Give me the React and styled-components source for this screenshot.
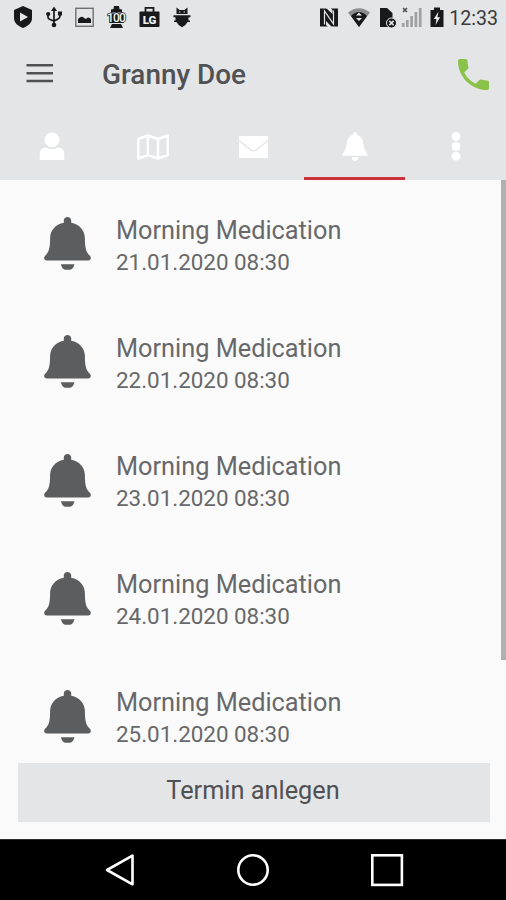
import React from "react";
import styled, { createGlobalStyle } from "styled-components";

const GlobalStyle = createGlobalStyle`
  * { box-sizing: border-box; }
  body { margin: 0; background: #fafafa; font-family: Roboto, "Liberation Sans", sans-serif; }
  svg { display: block; flex: none; overflow: visible; }
`;

const Screen = styled.div`
  display: flex;
  flex-direction: column;
  width: 506px;
  height: 900px;
  overflow: hidden;
  background: #fafafa;
`;

const Header = styled.header`
  flex: none;
  height: 180px;
  background: #e4e5e7;
`;

const StatusBar = styled.div`
  display: flex;
  justify-content: space-between;
  height: 36px;
  padding: 5px 8px 0 13px;
`;

const StatusGroup = styled.div`
  display: flex;
  align-items: flex-start;
  gap: ${(p) => p.$gap}px;
`;

const Clock = styled.span`
  margin-left: -3px;
  font-size: 19.6px;
  line-height: 27px;
  color: #3a3b3c;
`;

const AppBar = styled.div`
  display: flex;
  align-items: center;
  height: 77px;
  padding: 0 17px 0 26px;
`;

const MenuButton = styled.button`
  display: flex;
  padding: 0 0 1px;
  border: 0;
  background: none;
`;

const PageTitle = styled.h1`
  flex: 1;
  margin: 1px 0 0 49px;
  font-size: 27.9px;
  line-height: 32px;
  font-weight: 500;
  white-space: nowrap;
  color: #505153;
`;

const CallButton = styled.button`
  display: flex;
  padding: 0 0 1px;
  border: 0;
  background: none;
`;

const Tabs = styled.nav`
  display: grid;
  grid-template-columns: repeat(5, 1fr);
  height: 67px;
`;

const Tab = styled.button`
  display: flex;
  align-items: center;
  justify-content: center;
  padding: 3px 0 0 2px;
  border: 0;
  border-bottom: 3px solid ${(p) => (p.$active ? "#cc3338" : "transparent")};
  background: none;
`;

const Content = styled.main`
  display: flex;
  flex: none;
  height: 659px;
`;

const Column = styled.div`
  display: flex;
  flex-direction: column;
  flex: 1;
  padding-bottom: 17px;
`;

const List = styled.ul`
  flex: 1;
  min-height: 0;
  overflow: hidden;
  margin: 0;
  padding: 5px 0 0;
  list-style: none;
`;

const Item = styled.li`
  display: flex;
  align-items: center;
  gap: 25px;
  height: 118.15px;
  padding-left: 44px;
`;

const ItemText = styled.div`
  display: flex;
  flex-direction: column;
  padding-top: 4px;
  color: #67686a;
`;

const ItemTitle = styled.span`
  font-size: 25.3px;
  line-height: 32px;
  white-space: nowrap;
`;

const ItemDate = styled.span`
  font-size: 22.4px;
  line-height: 31px;
  white-space: nowrap;
`;

const CreateButton = styled.button`
  flex: none;
  height: 59px;
  margin: 0 11px 0 18px;
  padding: 0 2px 5px 0;
  border: 0;
  background: #e4e5e7;
  color: #505153;
  font-family: inherit;
  font-size: 25.3px;
`;

const ScrollTrack = styled.div`
  flex: none;
  width: 5px;
`;

const ScrollThumb = styled.div`
  height: 480px;
  background: #b0b0b0;
`;

const NavBar = styled.footer`
  display: flex;
  flex: none;
  align-items: center;
  gap: 102.5px;
  height: 61px;
  padding-left: 105px;
  background: #000;
  border-top: 1px solid #303030;
`;

const dark = "#18191a";

const ShieldIcon = () => (
  <svg width="20" height="24" viewBox="0 0 20 24">
    <path d="M10 1 L19 5 V13 C19 18 15 21 10 23 C5 21 1 18 1 13 V5Z" fill={dark} />
    <path d="M7 7.5 L15 12 L7 16.5Z" fill="#e4e5e7" />
  </svg>
);

const UsbIcon = () => (
  <svg width="16" height="24" viewBox="0 0 16 24">
    <path d="M8 5 V20 M2 9 V12 Q2 14 4 14.5 L8 16 L12 14 Q14 13 14 11 V8" fill="none" stroke={dark} strokeWidth="1.7" />
    <path d="M5 6 L8 1.5 L11 6Z M12 6.5 h4 v4 h-4Z" fill={dark} />
    <circle cx="2.2" cy="9" r="2.1" fill={dark} />
    <circle cx="8" cy="20" r="2.3" fill={dark} />
  </svg>
);

const PictureIcon = () => (
  <svg width="19" height="24" viewBox="0 0 19 24">
    <rect x=".8" y="3.3" width="17.4" height="18" fill="none" stroke="#6f7072" strokeWidth="1.4" />
    <path d="M3 18 V14 Q7 10 9 13 L11 14 Q13 11 16 14 V18Z" fill={dark} />
  </svg>
);

const HundredIcon = () => (
  <svg width="19" height="24" viewBox="0 0 19 24">
    <path d="M4 4.5 L6.5 4 L7 1 H12 L12.5 4 L15 4.5 V7.5 H4Z M2.5 8.5 H16.5 V18 H2.5Z M5 19 H14 L16 23 H3Z" fill={dark} />
    <text x="9" y="17" textAnchor="middle" fontFamily="Roboto, sans-serif" fontSize="12" fontWeight="500" letterSpacing="-.9" fill="#f2f2f2" stroke={dark} strokeWidth="1.5" paintOrder="stroke">100</text>
  </svg>
);

const BagIcon = () => (
  <svg width="21" height="24" viewBox="0 0 21 24">
    <path d="M6.5 7 V2.8 H14.5 V7" fill="none" stroke={dark} strokeWidth="1.8" />
    <rect x=".5" y="6.5" width="20" height="15.5" rx=".8" fill={dark} />
    <text x="10.5" y="18.6" textAnchor="middle" fontFamily="Roboto, sans-serif" fontSize="11.5" fontWeight="900" fill="#f0f0f0">LG</text>
  </svg>
);

const BugIcon = () => (
  <svg width="18" height="24" viewBox="0 0 18 24">
    <path d="M3.5 2.5 L6.6 5 H11.4 L14.5 2.5 V9 H3.5Z M.5 10.3 H17.5 V12.3 H15.5 V15.5 H17 V17 H14.5 Q12.5 21 9 22.3 Q5.5 21 3.5 17 H1 V15.5 H2.5 V12.3 H.5Z" fill={dark} />
    <path d="M6 7 h1.5 M10.5 7 h1.500" stroke="#e4e5e7" strokeWidth="1" />
  </svg>
);

const NfcIcon = () => (
  <svg width="18" height="24" viewBox="0 0 18 24">
    <path d="M0 3.5 H18 V21.5 H0Z" fill={dark} />
    <path d="M4.5 19.5 V6 L13.5 19 V5.5" fill="none" stroke="#e4e5e7" strokeWidth="1.2" />
    <path d="M6 3 L12.5 9 V5 L10.5 3Z M6 16 L12 22 H8 L6 20Z" fill="#e4e5e7" />
  </svg>
);

const WifiIcon = () => (
  <svg width="22" height="24" viewBox="0 0 22 24">
    <path d="M0 7.5 Q11 -1 22 7.5 L11 22Z" fill="#8b8c8e" />
    <path d="M3 11 Q11 3 19 11 L11 22Z" fill={dark} />
    <path d="M8 10.5 L11 7.500 L14 10.5Z M8 13 H14 L11 16Z" fill="#e4e5e7" />
  </svg>
);

const SimIcon = () => (
  <svg width="17" height="24" viewBox="0 0 17 24">
    <path d="M1 3 H8 L13.5 8 V22 H1Z" fill={dark} />
    <circle cx="12.5" cy="18" r="5" fill={dark} stroke="#e4e5e7" strokeWidth="1" />
    <path d="M10.4 15.9 L14.6 20.1 M14.6 15.9 L10.4 20.1" stroke="#e4e5e7" strokeWidth="1.5" />
  </svg>
);

const SignalIcon = () => (
  <svg width="20" height="24" viewBox="0 0 20 24">
    <path d="M2.200 22 V18 M6.3 22 V15 M10.600 22 V11 M14.900 22 V7 M19.200 22 V3" stroke="#a0a1a3" strokeWidth="2.7" />
    <path d="M2 3 L6 7 M6 3 L2 7" stroke="#4a4b4d" strokeWidth="1.5" />
  </svg>
);

const BatteryIcon = () => (
  <svg width="13" height="24" viewBox="0 0 13 24">
    <path d="M4 2.5 H10 V5 H13.5 V22 H.5 V5 H4Z" fill={dark} />
    <path d="M8.5 6.5 L3.900 14 H6.5 L5.5 20 L10.1 12.3 H7.4Z" fill="#eeeeee" />
  </svg>
);

const MenuIcon = () => (
  <svg width="27" height="22" viewBox="0 0 27 22">
    <path d="M.5 2.3 H27 M.5 10.3 H27 M.5 18 H27" stroke="#505153" strokeWidth="2.5" />
  </svg>
);

const PhoneIcon = () => (
  <svg width="31" height="31" viewBox="3 3 18 18">
    <path d="M6.62 10.79c1.44 2.83 3.76 5.14 6.59 6.59l2.2-2.2c.27-.27.67-.36 1.02-.24 1.12.37 2.33.57 3.57.57.55 0 1 .45 1 1V20c0 .55-.45 1-1 1-9.39 0-17-7.61-17-17 0-.55.45-1 1-1h3.5c.55 0 1 .45 1 1 0 1.25.2 2.45.57 3.57.11.35.03.74-.25 1.02l-2.2 2.2z" fill="#8bc34a" />
  </svg>
);

const PersonIcon = () => (
  <svg width="26" height="29" viewBox="0 0 26 29">
    <circle cx="13" cy="7.8" r="7.4" fill="#fff" />
    <path d="M.7 28 V22 Q.7 15.5 7 15.5 Q13 18.5 19 15.5 Q25.3 15.5 25.3 22 V28Z" fill="#fff" />
  </svg>
);

const MapIcon = () => (
  <svg width="32" height="26" viewBox="0 0 32 26">
    <path d="M1.3 5 L10.8 1.5 L21 5 L30.7 1.5 V21 L21 24.5 L10.8 21 L1.3 24.5Z M10.8 1.5 V21 M21 5 V24.5" fill="none" stroke="#fff" strokeWidth="2.4" strokeLinejoin="round" />
  </svg>
);

const MailIcon = () => (
  <svg width="29" height="22" viewBox="0 0 29 22">
    <rect width="29" height="22" rx="1" fill="#fff" />
    <path d="M0 4.5 L11.5 13.7 Q14.5 16 17.5 13.7 L29 4.5" fill="none" stroke="#e4e5e7" strokeWidth="1.4" />
  </svg>
);

const BellIcon = ({ width, height, color }) => (
  <svg width={width} height={height} viewBox="0 0 140 160">
    <path d="M70 0 C76 0 81 4 81 10 V17 C107 22 121 40 122 62 C122 95 126 105 137 116 C142 121 140 130 132 130 H8 C0 130 -2 121 3 116 C14 105 18 95 18 62 C19 40 33 22 59 17 V10 C59 4 64 0 70 0Z" fill={color} />
    <path d="M50 141 H91 Q86 158 76 158 H65 Q55 158 50 141Z" fill={color} />
  </svg>
);

const TabBellIcon = () => (
  <svg width="26" height="29" viewBox="0 0 26 29">
    <path d="M13 0 Q14.7 0 14.7 2.4 Q20.5 4.5 21.2 11 Q22 18 25.5 22 V23.7 H.5 V22 Q4 18 4.8 11 Q5.500 4.5 11.3 2.4 Q11.3 0 13 0Z M9.7 25 H16.3 Q16 29 13 29 Q10 29 9.7 25Z" fill="#fff" />
  </svg>
);

const MoreIcon = () => (
  <svg width="10" height="29" viewBox="0 0 10 29">
    <circle cx="5" cy="4.5" r="4.4" fill="#fff" />
    <circle cx="5" cy="14.3" r="4.4" fill="#fff" />
    <circle cx="5" cy="24.2" r="4.4" fill="#fff" />
  </svg>
);

const BackIcon = () => (
  <svg width="29" height="32" viewBox="0 0 29 32">
    <path d="M27.5 1.7 V30.3 L2 16Z" fill="none" stroke="#fff" strokeWidth="2.6" strokeLinejoin="round" />
  </svg>
);

const HomeIcon = () => (
  <svg width="32" height="32" viewBox="0 0 32 32">
    <circle cx="16" cy="16" r="14.7" fill="none" stroke="#fff" strokeWidth="2.6" />
  </svg>
);

const RecentIcon = () => (
  <svg width="32" height="32" viewBox="0 0 32 32">
    <rect x="1.3" y="1.3" width="29.6" height="29.6" fill="none" stroke="#fff" strokeWidth="2.6" />
  </svg>
);

const tabs = [
  { id: "profile", Icon: PersonIcon },
  { id: "map", Icon: MapIcon },
  { id: "messages", Icon: MailIcon },
  { id: "reminders", Icon: TabBellIcon },
  { id: "more", Icon: MoreIcon },
];

const reminders = [
  "21.01.2020 08:30",
  "22.01.2020 08:30",
  "23.01.2020 08:30",
  "24.01.2020 08:30",
  "25.01.2020 08:30",
];

export default function App() {
  return (
    <Screen>
      <GlobalStyle />
      <Header>
        <StatusBar>
          <StatusGroup $gap={13}>
            <ShieldIcon />
            <UsbIcon />
            <PictureIcon />
            <HundredIcon />
            <BagIcon />
            <BugIcon />
          </StatusGroup>
          <StatusGroup $gap={9}>
            <StatusGroup $gap={10}>
              <NfcIcon />
              <WifiIcon />
            </StatusGroup>
            <StatusGroup $gap={5}>
              <SimIcon />
              <SignalIcon />
            </StatusGroup>
            <BatteryIcon />
            <Clock>12:33</Clock>
          </StatusGroup>
        </StatusBar>
        <AppBar>
          <MenuButton aria-label="Menu"><MenuIcon /></MenuButton>
          <PageTitle>Granny Doe</PageTitle>
          <CallButton aria-label="Call"><PhoneIcon /></CallButton>
        </AppBar>
        <Tabs>
          {tabs.map(({ id, Icon }) => (
            <Tab key={id} aria-label={id} $active={id === "reminders"}>
              <Icon />
            </Tab>
          ))}
        </Tabs>
      </Header>
      <Content>
        <Column>
          <List>
            {reminders.map((date) => (
              <Item key={date}>
                <BellIcon width={47} height={53.5} color="#5c5d5e" />
                <ItemText>
                  <ItemTitle>Morning Medication</ItemTitle>
                  <ItemDate>{date}</ItemDate>
                </ItemText>
              </Item>
            ))}
          </List>
          <CreateButton>Termin anlegen</CreateButton>
        </Column>
        <ScrollTrack>
          <ScrollThumb />
        </ScrollTrack>
      </Content>
      <NavBar>
        <BackIcon />
        <HomeIcon />
        <RecentIcon />
      </NavBar>
    </Screen>
  );
}
